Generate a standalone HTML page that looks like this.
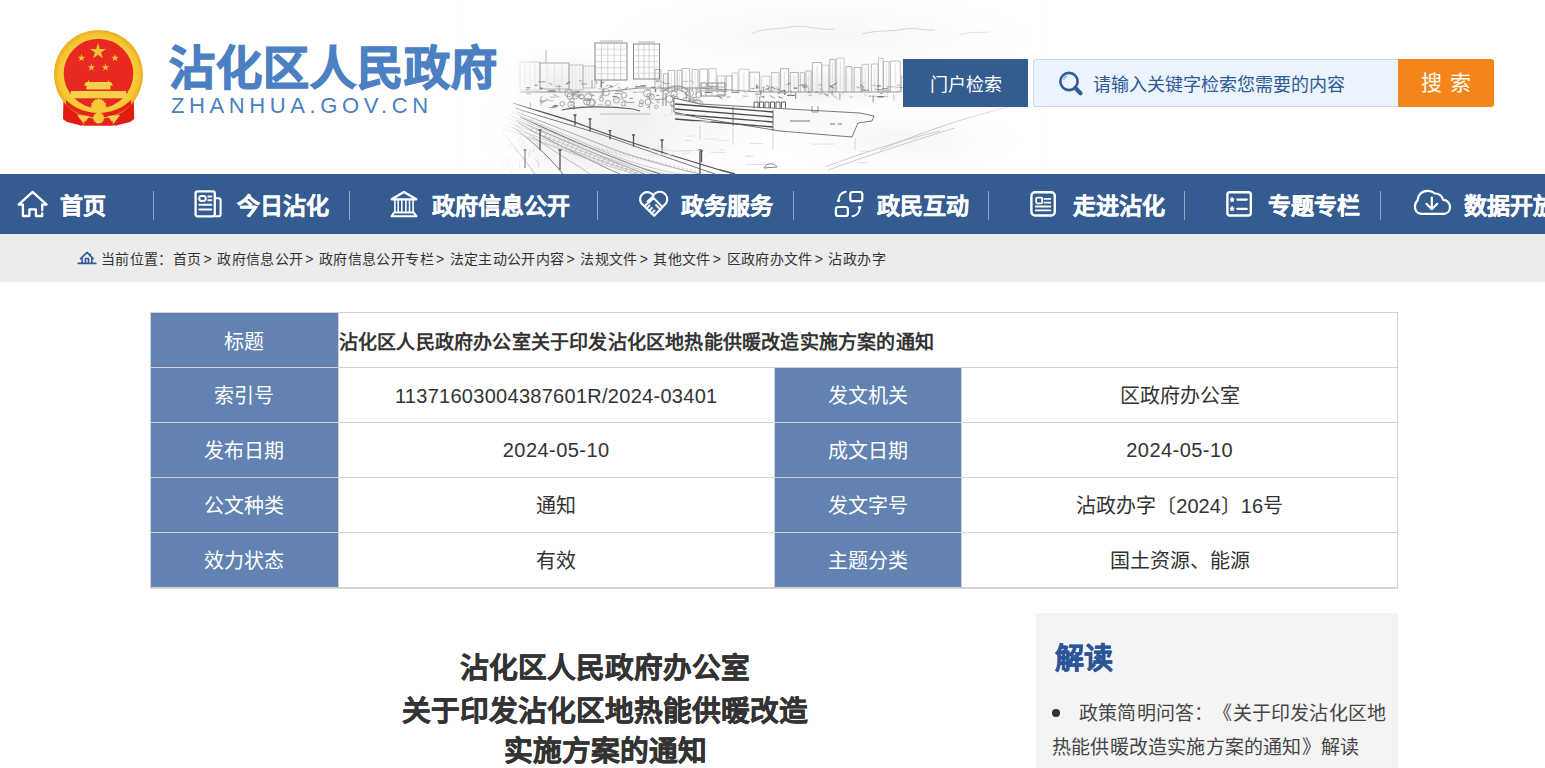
<!DOCTYPE html>
<html lang="zh-CN"><head><meta charset="utf-8">
<style>
*{margin:0;padding:0;box-sizing:border-box}
html,body{text-spacing-trim:space-all;width:1545px;height:768px;overflow:hidden;background:#fff;font-family:"Liberation Sans",sans-serif;color:#333}
.abs{position:absolute}
#header{position:absolute;left:0;top:0;width:1545px;height:174px;background:#fff;overflow:hidden}
.sitename{position:absolute;left:169px;top:38px;font-size:46px;font-weight:900;color:#4b80c2;-webkit-text-stroke:1.4px #4b80c2;letter-spacing:1px;white-space:nowrap;line-height:60px}
.siteen{position:absolute;left:171px;top:93px;font-size:22px;color:#4b80c2;letter-spacing:4.6px;white-space:nowrap;line-height:26px}
.btn-portal{position:absolute;left:903px;top:59px;width:125px;height:48px;background:#335c8f;color:#fff;font-size:18px;text-align:center;line-height:52px}
.search{position:absolute;left:1033px;top:59px;width:366px;height:48px;background:#ebf3fc;border:1px solid #c3d8f1;border-right:none;border-radius:3px 0 0 3px}
.search-txt{position:absolute;left:1093px;top:61px;line-height:48px;font-size:18px;color:#2e5a96;white-space:nowrap}
.btn-search{position:absolute;left:1398px;top:59px;width:96px;height:48px;background:#f48619;color:#fff;font-size:21px;text-align:center;line-height:48px;border-radius:0 3px 3px 0;letter-spacing:8px;text-indent:8px}
#nav{position:absolute;left:0;top:174px;width:1545px;height:60px;background:#345c90}
.ni{position:absolute;top:2px;height:60px;line-height:60px;color:#fff;font-size:23px;font-weight:bold;-webkit-text-stroke:0.35px #fff;white-space:nowrap}
.sep{position:absolute;top:17px;width:1px;height:29px;background:#8fa7c7}
#crumb{position:absolute;left:0;top:234px;width:1545px;height:48px;background:#ececec}
.crumb-txt{position:absolute;left:101px;top:1px;line-height:48px;font-size:14px;color:#333;white-space:nowrap;letter-spacing:0.35px}
.crumb-txt i{font-style:normal;margin:0 1px 0 2px}
table.info{position:absolute;left:150px;top:312px;border-collapse:collapse;width:1248px}
table.info td{border:1px solid #d0d0d0;height:55px;padding:0 0 2px 0;text-align:center;font-size:20px;color:#333}
table.info td.l{background:#6283b1;color:#fff;width:188px}
table.info td.v{width:436px}
.dt{position:absolute;left:305px;width:600px;text-align:center;font-size:28.7px;font-weight:bold;color:#333;-webkit-text-stroke:0.5px #333;line-height:44px;white-space:nowrap}
.side{position:absolute;left:1036px;top:613px;width:362px;height:155px;background:#f4f4f4}
</style></head><body>
<div id="header">
  <svg id="sketch" class="abs" style="left:440px;top:0" width="620" height="174" viewBox="440 0 620 174" fill="none">
<defs><filter id="soft" filterUnits="userSpaceOnUse" x="440" y="0" width="620" height="174"><feGaussianBlur stdDeviation="0.6"/></filter><radialGradient id="haze" cx="0.5" cy="0.5" r="0.5"><stop offset="0" stop-color="#e8e8e8" stop-opacity="0.7"/><stop offset="1" stop-color="#f0f0f0" stop-opacity="0"/></radialGradient></defs><ellipse cx="630" cy="122" rx="150" ry="68" fill="url(#haze)"/><ellipse cx="590" cy="150" rx="100" ry="40" fill="url(#haze)"/><ellipse cx="560" cy="80" rx="60" ry="30" fill="url(#haze)"/><ellipse cx="820" cy="35" rx="210" ry="40" fill="url(#haze)" opacity="0.5"/><ellipse cx="900" cy="140" rx="120" ry="30" fill="url(#haze)" opacity="0.6"/><ellipse cx="820" cy="86" rx="110" ry="28" fill="url(#haze)"/><g filter="url(#soft)">
<path d="M462 0 V174 M1045 0 V174" stroke="#efefef" stroke-width="1" />
<path d="M752 34 C760 28 775 30 790 27 C805 24 820 31 835 29 M862 34 C875 30 890 32 905 29 C915 27 925 31 935 30 M960 35 C970 31 980 33 990 32" stroke="#d0d0d0" stroke-width="0.9" />
<path d="M655.0 92 V69.5 H660.9 V92" stroke="#999" stroke-width="0.7" />
<path d="M658.0 72.5 V90" stroke="#d4d4d4" stroke-width="0.6" />
<path d="M663.4 92 V73.8 H668.0 V92" stroke="#999" stroke-width="0.7" />
<path d="M665.7 76.8 V90" stroke="#d4d4d4" stroke-width="0.6" />
<path d="M668.2 92 V70.4 H674.7 V92" stroke="#999" stroke-width="0.7" />
<path d="M671.5 73.4 V90" stroke="#d4d4d4" stroke-width="0.6" />
<path d="M677.2 92 V70.2 H682.0 V92" stroke="#999" stroke-width="0.7" />
<path d="M679.6 73.2 V90" stroke="#d4d4d4" stroke-width="0.6" />
<path d="M682.1 92 V68.5 H689.7 V92" stroke="#a8a8a8" stroke-width="0.7" />
<path d="M685.9 71.5 V90" stroke="#d4d4d4" stroke-width="0.6" />
<path d="M692.2 92 V69.4 H698.0 V92" stroke="#a8a8a8" stroke-width="0.7" />
<path d="M695.1 72.4 V90" stroke="#d4d4d4" stroke-width="0.6" />
<path d="M699.7 92 V69.0 H707.7 V92" stroke="#999" stroke-width="0.7" />
<path d="M708.9 92 V68.6 H716.2 V92" stroke="#a8a8a8" stroke-width="0.7" />
<path d="M717.6 92 V75.8 H724.8 V92" stroke="#b8b8b8" stroke-width="0.7" />
<path d="M721.2 78.8 V90" stroke="#d4d4d4" stroke-width="0.6" />
<path d="M726.2 92 V75.9 H732.0 V92" stroke="#999" stroke-width="0.7" />
<path d="M732.2 92 V73.0 H738.0 V92" stroke="#b8b8b8" stroke-width="0.7" />
<path d="M738.9 92 V69.2 H748.8 V92" stroke="#b8b8b8" stroke-width="0.7" />
<path d="M743.8 72.2 V90" stroke="#d4d4d4" stroke-width="0.6" />
<path d="M749.8 92 V72.2 H759.4 V92" stroke="#999" stroke-width="0.7" />
<path d="M754.6 75.2 V90" stroke="#d4d4d4" stroke-width="0.6" />
<path d="M761.1 92 V76.2 H769.8 V92" stroke="#b8b8b8" stroke-width="0.7" />
<path d="M771.6 92 V72.6 H779.1 V92" stroke="#a8a8a8" stroke-width="0.7" />
<path d="M780.5 92 V68.6 H788.5 V92" stroke="#999" stroke-width="0.7" />
<path d="M784.5 71.6 V90" stroke="#d4d4d4" stroke-width="0.6" />
<path d="M790.2 92 V72.5 H798.3 V92" stroke="#999" stroke-width="0.7" />
<path d="M794.3 75.5 V90" stroke="#d4d4d4" stroke-width="0.6" />
<path d="M800.3 92 V72.6 H804.4 V92" stroke="#a8a8a8" stroke-width="0.7" />
<path d="M805.9 92 V70.9 H811.2 V92" stroke="#999" stroke-width="0.7" />
<path d="M808.6 73.9 V90" stroke="#d4d4d4" stroke-width="0.6" />
<path d="M812.4 92 V62.5 H821.6 V92" stroke="#999" stroke-width="0.7" />
<path d="M817.0 65.5 V90" stroke="#d4d4d4" stroke-width="0.6" />
<path d="M822.0 92 V65.1 H828.6 V92" stroke="#b8b8b8" stroke-width="0.7" />
<path d="M829.8 92 V59.5 H835.2 V92" stroke="#999" stroke-width="0.7" />
<path d="M832.5 62.5 V90" stroke="#d4d4d4" stroke-width="0.6" />
<path d="M836.6 92 V58.0 H844.1 V92" stroke="#b8b8b8" stroke-width="0.7" />
<path d="M840.4 61.0 V90" stroke="#d4d4d4" stroke-width="0.6" />
<path d="M846.0 92 V66.6 H851.9 V92" stroke="#999" stroke-width="0.7" />
<path d="M854.1 92 V67.5 H860.8 V92" stroke="#999" stroke-width="0.7" />
<path d="M862.0 92 V64.3 H868.4 V92" stroke="#a8a8a8" stroke-width="0.7" />
<path d="M865.2 67.3 V90" stroke="#d4d4d4" stroke-width="0.6" />
<path d="M871.4 92 V64.0 H878.0 V92" stroke="#a8a8a8" stroke-width="0.7" />
<path d="M874.7 67.0 V90" stroke="#d4d4d4" stroke-width="0.6" />
<path d="M878.5 92 V58.3 H883.1 V92" stroke="#a8a8a8" stroke-width="0.7" />
<path d="M883.5 92 V61.6 H889.0 V92" stroke="#a8a8a8" stroke-width="0.7" />
<path d="M886.3 64.6 V90" stroke="#d4d4d4" stroke-width="0.6" />
<path d="M890.5 92 V61.1 H900.4 V92" stroke="#a8a8a8" stroke-width="0.7" />
<path d="M895.4 64.1 V90" stroke="#d4d4d4" stroke-width="0.6" />
<path d="M901.4 92 V76.3 H907.0 V92" stroke="#a8a8a8" stroke-width="0.7" />
<path d="M904.2 79.3 V90" stroke="#d4d4d4" stroke-width="0.6" />
<rect x="520" y="62" width="20" height="28" stroke="#c8c8c8" stroke-width="0.8"/>
<path d="M525.0 62 V90" stroke="#d8d8d8" stroke-width="0.6" />
<path d="M530.0 62 V90" stroke="#d8d8d8" stroke-width="0.6" />
<path d="M535.0 62 V90" stroke="#d8d8d8" stroke-width="0.6" />
<rect x="540" y="63" width="29" height="26" stroke="#9a9a9a" stroke-width="0.8"/>
<path d="M547.2 63 V89" stroke="#d8d8d8" stroke-width="0.6" />
<path d="M554.5 63 V89" stroke="#d8d8d8" stroke-width="0.6" />
<path d="M561.8 63 V89" stroke="#d8d8d8" stroke-width="0.6" />
<rect x="569" y="65" width="14" height="25" stroke="#b0b0b0" stroke-width="0.8"/>
<path d="M572.5 65 V90" stroke="#d8d8d8" stroke-width="0.6" />
<path d="M576.0 65 V90" stroke="#d8d8d8" stroke-width="0.6" />
<path d="M579.5 65 V90" stroke="#d8d8d8" stroke-width="0.6" />
<rect x="583" y="66" width="12" height="22" stroke="#b8b8b8" stroke-width="0.8"/>
<path d="M586.0 66 V88" stroke="#d8d8d8" stroke-width="0.6" />
<path d="M589.0 66 V88" stroke="#d8d8d8" stroke-width="0.6" />
<path d="M592.0 66 V88" stroke="#d8d8d8" stroke-width="0.6" />
<path d="M546 50 V63" stroke="#aaa" stroke-width="0.8" />
<rect x="595" y="43" width="32" height="37" stroke="#7c7c7c" stroke-width="0.9"/>
<path d="M601.4 43 V80" stroke="#b9b9b9" stroke-width="0.6" />
<path d="M607.8 43 V80" stroke="#b9b9b9" stroke-width="0.6" />
<path d="M614.2 43 V80" stroke="#b9b9b9" stroke-width="0.6" />
<path d="M620.6 43 V80" stroke="#b9b9b9" stroke-width="0.6" />
<path d="M595 49.2 H627" stroke="#c6c6c6" stroke-width="0.6" />
<path d="M595 55.3 H627" stroke="#c6c6c6" stroke-width="0.6" />
<path d="M595 61.5 H627" stroke="#c6c6c6" stroke-width="0.6" />
<path d="M595 67.7 H627" stroke="#c6c6c6" stroke-width="0.6" />
<path d="M595 73.8 H627" stroke="#c6c6c6" stroke-width="0.6" />
<rect x="633.5" y="44" width="26" height="35" stroke="#7c7c7c" stroke-width="0.9"/>
<path d="M638.7 44 V79" stroke="#b9b9b9" stroke-width="0.6" />
<path d="M643.9 44 V79" stroke="#b9b9b9" stroke-width="0.6" />
<path d="M649.1 44 V79" stroke="#b9b9b9" stroke-width="0.6" />
<path d="M654.3 44 V79" stroke="#b9b9b9" stroke-width="0.6" />
<path d="M633.5 49.8 H659.5" stroke="#c6c6c6" stroke-width="0.6" />
<path d="M633.5 55.7 H659.5" stroke="#c6c6c6" stroke-width="0.6" />
<path d="M633.5 61.5 H659.5" stroke="#c6c6c6" stroke-width="0.6" />
<path d="M633.5 67.3 H659.5" stroke="#c6c6c6" stroke-width="0.6" />
<path d="M633.5 73.2 H659.5" stroke="#c6c6c6" stroke-width="0.6" />
<path d="M600 41 H623 M638 42 H655" stroke="#999" stroke-width="0.8" />
<path d="M882.0 88.7 l6.1 0.0" stroke="#666" stroke-width="0.74904484517314" />
<path d="M766.1 85.2 l6.1 3.5" stroke="#aaa" stroke-width="1.05412927183152" />
<path d="M658.4 86.2 l4.5 2.6" stroke="#aaa" stroke-width="0.9182209626698556" />
<path d="M755.0 94.2 l6.5 0.0" stroke="#999" stroke-width="1.0091664716626867" />
<path d="M802.5 86.9 l5.1 0.0" stroke="#777" stroke-width="1.094801793351535" />
<path d="M821.3 90.1 l2.7 1.6" stroke="#aaa" stroke-width="0.8236138388833618" />
<path d="M876.4 96.8 l7.7 0.0" stroke="#777" stroke-width="0.7102311614981187" />
<path d="M610.1 85.5 l2.8 1.6" stroke="#666" stroke-width="1.020217763639645" />
<path d="M704.8 92.5 l6.8 0.0" stroke="#777" stroke-width="1.0548885687758616" />
<path d="M818.4 93.8 l4.9 0.0" stroke="#bbb" stroke-width="0.9945677155101382" />
<path d="M649.7 102.4 l0.0 7.8" stroke="#bbb" stroke-width="0.8006934089338508" />
<path d="M880.0 93.4 l3.0 0.0" stroke="#777" stroke-width="0.6755753501907449" />
<path d="M864.3 94.5 l2.5 1.4" stroke="#bbb" stroke-width="0.92863414636801" />
<path d="M656.4 95.4 l2.8 0.0" stroke="#777" stroke-width="0.8632905235495278" />
<path d="M875.1 89.6 l7.2 0.0" stroke="#777" stroke-width="0.7259174056827269" />
<path d="M634.9 86.7 l5.5 0.0" stroke="#666" stroke-width="0.8095062763772718" />
<path d="M574.2 105.5 l0.0 4.1" stroke="#666" stroke-width="1.007523516209039" />
<path d="M718.8 94.8 l7.3 0.0" stroke="#666" stroke-width="0.6759181921314693" />
<path d="M716.5 95.3 l5.8 3.3" stroke="#777" stroke-width="0.9880194827883335" />
<path d="M581.2 84.0 l5.7 0.0" stroke="#666" stroke-width="0.6308776435478857" />
<path d="M780.9 90.9 l4.9 0.0" stroke="#666" stroke-width="0.6284112850148019" />
<path d="M596.7 81.2 l0.0 2.6" stroke="#666" stroke-width="0.6139328791200859" />
<path d="M860.3 84.8 l3.4 2.0" stroke="#666" stroke-width="0.8560807362176597" />
<path d="M784.8 89.9 l0.0 5.2" stroke="#666" stroke-width="1.0707505637692505" />
<path d="M787.2 95.4 l7.7 0.0" stroke="#666" stroke-width="1.0463774708780165" />
<path d="M601.0 92.5 l0.0 4.5" stroke="#bbb" stroke-width="0.7579898971041519" />
<path d="M776.7 89.6 l3.3 0.0" stroke="#777" stroke-width="1.0485132164393836" />
<path d="M582.9 100.1 l6.0 0.0" stroke="#aaa" stroke-width="1.0414164168285378" />
<path d="M887.8 86.9 l0.0 7.7" stroke="#bbb" stroke-width="0.6813975855330804" />
<path d="M775.4 86.9 l5.4 3.1" stroke="#bbb" stroke-width="0.76955807216941" />
<path d="M598.4 88.9 l6.3 0.0" stroke="#aaa" stroke-width="0.877025123904164" />
<path d="M690.2 80.5 l3.5 2.0" stroke="#aaa" stroke-width="0.8561311422317278" />
<path d="M549.1 107.6 l6.7 0.0" stroke="#777" stroke-width="0.7327821361717599" />
<path d="M539.8 101.8 l3.6 0.0" stroke="#bbb" stroke-width="1.0247939136304476" />
<path d="M778.5 96.3 l3.8 2.2" stroke="#666" stroke-width="0.885297462696627" />
<path d="M787.7 85.2 l2.0 -1.2" stroke="#999" stroke-width="0.8126585203978614" />
<path d="M552.2 106.3 l5.8 0.0" stroke="#777" stroke-width="0.9040887112029964" />
<path d="M608.4 87.4 l2.7 0.0" stroke="#aaa" stroke-width="1.0971529452244346" />
<path d="M681.7 105.6 l5.7 0.0" stroke="#666" stroke-width="0.9547683590592302" />
<path d="M876.8 96.6 l3.6 0.0" stroke="#999" stroke-width="1.0661234442591385" />
<path d="M760.8 90.9 l0.0 3.2" stroke="#666" stroke-width="0.9360785997580733" />
<path d="M626.4 102.5 l8.0 0.0" stroke="#777" stroke-width="0.6092169483493283" />
<path d="M714.6 96.7 l5.1 0.0" stroke="#bbb" stroke-width="0.6531406725135457" />
<path d="M832.1 89.6 l0.0 5.0" stroke="#666" stroke-width="0.7538915249993716" />
<path d="M605.7 86.4 l2.8 -1.6" stroke="#999" stroke-width="0.8023488543534207" />
<path d="M655.3 81.5 l2.8 0.0" stroke="#aaa" stroke-width="0.815370353919441" />
<path d="M545.8 98.6 l3.7 2.1" stroke="#aaa" stroke-width="0.899389206775326" />
<path d="M784.8 84.6 l3.1 0.0" stroke="#bbb" stroke-width="0.6018113563330586" />
<path d="M661.6 89.2 l7.9 0.0" stroke="#999" stroke-width="0.6172233617516859" />
<path d="M855.9 86.8 l3.1 0.0" stroke="#bbb" stroke-width="0.641945280412747" />
<path d="M629.6 98.4 l3.5 0.0" stroke="#777" stroke-width="0.7320843429008286" />
<path d="M558.7 91.2 l2.3 0.0" stroke="#aaa" stroke-width="0.7521222801121692" />
<path d="M612.3 96.4 l5.2 0.0" stroke="#666" stroke-width="0.794758235530225" />
<path d="M647.3 107.6 l2.5 -1.4" stroke="#666" stroke-width="0.9216097248522648" />
<path d="M541.4 103.4 l6.4 -3.7" stroke="#bbb" stroke-width="0.966926061738481" />
<path d="M829.6 85.8 l4.5 2.6" stroke="#666" stroke-width="1.0174687967185132" />
<path d="M826.8 94.7 l4.8 -2.8" stroke="#999" stroke-width="0.6425458514361103" />
<path d="M540.7 97.8 l0.0 7.8" stroke="#bbb" stroke-width="0.8792636232479674" />
<path d="M760.4 92.1 l0.0 6.1" stroke="#aaa" stroke-width="0.601657163563924" />
<path d="M824.1 93.7 l4.3 2.5" stroke="#777" stroke-width="0.929649744652175" />
<path d="M549.8 100.6 l3.5 0.0" stroke="#aaa" stroke-width="0.7173928109159136" />
<path d="M808.7 87.0 l0.0 5.9" stroke="#bbb" stroke-width="1.0227656252032538" />
<path d="M553.8 105.5 l3.7 0.0" stroke="#666" stroke-width="0.9163964213533811" />
<path d="M599.4 96.8 l3.5 -2.0" stroke="#aaa" stroke-width="0.9105753755858603" />
<path d="M575.0 93.5 l4.3 -2.5" stroke="#777" stroke-width="0.9460925862852241" />
<path d="M778.4 87.8 l0.0 5.1" stroke="#bbb" stroke-width="0.8331695771484441" />
<path d="M569.4 105.0 l3.2 0.0" stroke="#bbb" stroke-width="0.6087522279083314" />
<path d="M697.1 103.0 l0.0 7.8" stroke="#aaa" stroke-width="0.793424173481156" />
<path d="M868.7 96.1 l2.4 0.0" stroke="#999" stroke-width="0.9737430890055958" />
<path d="M623.2 90.1 l4.9 -2.8" stroke="#666" stroke-width="0.7397839482384255" />
<path d="M567.3 90.2 l0.0 5.0" stroke="#bbb" stroke-width="0.6124172015453326" />
<path d="M526.3 93.8 l4.7 0.0" stroke="#999" stroke-width="0.8080905971823638" />
<path d="M666.0 83.4 l4.0 0.0" stroke="#aaa" stroke-width="1.019555397325231" />
<path d="M570.0 105.9 l5.4 -3.1" stroke="#aaa" stroke-width="0.7266061081447527" />
<path d="M549.4 90.9 l7.2 0.0" stroke="#aaa" stroke-width="1.0627077446432887" />
<path d="M808.4 95.1 l3.7 0.0" stroke="#aaa" stroke-width="0.9174817485198001" />
<path d="M580.8 107.2 l4.6 0.0" stroke="#999" stroke-width="0.986591819574495" />
<path d="M819.4 89.6 l1.9 -1.1" stroke="#bbb" stroke-width="1.0567119437296926" />
<path d="M877.8 91.1 l6.3 0.0" stroke="#bbb" stroke-width="0.8254302114803869" />
<path d="M807.3 92.4 l3.7 0.0" stroke="#666" stroke-width="0.6636556601925299" />
<path d="M702.1 88.5 l3.3 -1.9" stroke="#aaa" stroke-width="0.8031046325564211" />
<path d="M614.5 93.5 l6.0 0.0" stroke="#999" stroke-width="0.9216025164785123" />
<path d="M553.2 94.0 l6.0 3.4" stroke="#999" stroke-width="0.8264930378878839" />
<path d="M649.8 101.3 l4.0 2.3" stroke="#999" stroke-width="0.7220428164702449" />
<path d="M590.5 95.6 l3.9 0.0" stroke="#aaa" stroke-width="1.0046792222917742" />
<path d="M600.8 80.6 l0.0 7.2" stroke="#bbb" stroke-width="0.9729202729618853" />
<path d="M603.8 87.6 l0.0 6.5" stroke="#aaa" stroke-width="0.8871403841960626" />
<path d="M660.1 99.2 l5.2 0.0" stroke="#777" stroke-width="0.7355104405313363" />
<path d="M618.2 91.2 l4.7 0.0" stroke="#777" stroke-width="0.6636235104212295" />
<path d="M684.4 101.4 l5.9 3.4" stroke="#bbb" stroke-width="0.6000893439096878" />
<path d="M671.8 106.0 l0.0 7.0" stroke="#bbb" stroke-width="0.7242326415445923" />
<path d="M565.9 84.3 l4.4 -2.6" stroke="#777" stroke-width="1.0707452797345645" />
<path d="M795.7 92.4 l0.0 6.6" stroke="#777" stroke-width="0.8757504574092538" />
<path d="M539.8 101.9 l3.4 0.0" stroke="#aaa" stroke-width="1.0812174481450276" />
<path d="M759.9 90.9 l4.6 0.0" stroke="#777" stroke-width="0.6351759541792769" />
<path d="M721.7 91.6 l4.3 0.0" stroke="#666" stroke-width="0.6005760118755014" />
<path d="M726.6 97.0 l3.7 0.0" stroke="#999" stroke-width="0.8376521100337718" />
<path d="M613.0 86.9 l6.7 -3.9" stroke="#aaa" stroke-width="0.6276543573356694" />
<path d="M597.8 104.8 l5.9 0.0" stroke="#aaa" stroke-width="0.7139202552562768" />
<path d="M684.1 90.4 l4.3 -2.5" stroke="#aaa" stroke-width="0.9591661208143714" />
<path d="M660.9 91.1 l2.0 0.0" stroke="#666" stroke-width="0.6337162286237574" />
<path d="M710.9 86.6 l6.6 0.0" stroke="#999" stroke-width="0.8325570368075476" />
<path d="M624.4 104.9 l2.3 1.3" stroke="#bbb" stroke-width="0.9050491556052611" />
<path d="M861.2 90.3 l7.5 0.0" stroke="#666" stroke-width="0.6731915269863737" />
<path d="M672.5 86.0 l7.8 0.0" stroke="#bbb" stroke-width="0.6259202707926131" />
<path d="M547.6 91.0 l7.4 0.0" stroke="#777" stroke-width="1.0987649026489303" />
<path d="M874.3 88.3 l2.7 1.6" stroke="#bbb" stroke-width="0.615946843891692" />
<path d="M774.2 88.9 l4.2 0.0" stroke="#bbb" stroke-width="0.6846304711288126" />
<path d="M526.1 87.8 l4.1 0.0" stroke="#666" stroke-width="1.0821356078937836" />
<path d="M602.8 90.0 l0.0 6.9" stroke="#777" stroke-width="0.6246286679255086" />
<path d="M702.5 88.8 l7.5 0.0" stroke="#aaa" stroke-width="0.7821244311977915" />
<path d="M861.4 84.4 l3.9 -2.2" stroke="#bbb" stroke-width="0.6203247419579613" />
<path d="M538.1 81.8 l7.5 0.0" stroke="#999" stroke-width="0.9736434022443434" />
<path d="M862.0 88.4 l3.1 1.8" stroke="#777" stroke-width="0.7310862367840032" />
<path d="M793.7 88.1 l3.7 0.0" stroke="#666" stroke-width="1.0582298018249063" />
<path d="M762.7 96.3 l2.1 0.0" stroke="#777" stroke-width="0.8375945289268016" />
<path d="M883.8 96.4 l4.3 0.0" stroke="#bbb" stroke-width="1.0074001256133387" />
<path d="M574.8 93.9 l1.8 -1.0" stroke="#aaa" stroke-width="1.0113776262555643" />
<path d="M814.8 91.9 l4.0 0.0" stroke="#bbb" stroke-width="0.7809292204075792" />
<path d="M818.3 85.0 l3.2 0.0" stroke="#999" stroke-width="0.8038783843246587" />
<path d="M768.6 90.3 l5.3 0.0" stroke="#bbb" stroke-width="1.0417373132155143" />
<path d="M895.4 87.4 l2.5 0.0" stroke="#bbb" stroke-width="0.8492376341984873" />
<path d="M791.2 89.8 l0.0 3.4" stroke="#bbb" stroke-width="0.910153822940821" />
<path d="M777.8 93.7 l6.1 -3.5" stroke="#777" stroke-width="0.9898752959105044" />
<path d="M635.2 87.8 l3.6 0.0" stroke="#aaa" stroke-width="0.699595045445106" />
<path d="M617.8 86.9 l2.5 1.5" stroke="#999" stroke-width="0.7631689595610056" />
<path d="M673.5 107.8 l5.0 0.0" stroke="#777" stroke-width="0.9266632760462005" />
<path d="M896.6 85.3 l4.8 0.0" stroke="#bbb" stroke-width="1.0571877769152682" />
<path d="M540.1 88.2 l2.7 0.0" stroke="#666" stroke-width="1.0864825897959063" />
<path d="M743.7 96.1 l4.2 0.0" stroke="#bbb" stroke-width="0.9015210936216571" />
<path d="M815.6 92.6 l1.8 -1.0" stroke="#666" stroke-width="0.9548530512301177" />
<path d="M656.1 81.0 l4.0 0.0" stroke="#999" stroke-width="1.0999368796308104" />
<path d="M539.3 100.5 l7.5 0.0" stroke="#aaa" stroke-width="0.8044974479016652" />
<path d="M664.4 97.4 l2.5 0.0" stroke="#bbb" stroke-width="0.8740224170815462" />
<path d="M548.7 82.8 l3.8 2.2" stroke="#999" stroke-width="0.9195909728631272" />
<path d="M559.2 84.6 l0.0 6.2" stroke="#aaa" stroke-width="0.9339054707720718" />
<path d="M681.7 81.4 l6.5 0.0" stroke="#bbb" stroke-width="0.808222691037555" />
<path d="M849.1 97.0 l4.2 0.0" stroke="#bbb" stroke-width="0.9640158489531779" />
<path d="M601.4 80.2 l0.0 7.4" stroke="#777" stroke-width="1.0101842905971707" />
<path d="M677.3 104.7 l4.8 0.0" stroke="#999" stroke-width="0.6074171872872688" />
<path d="M731.8 92.3 l7.5 0.0" stroke="#666" stroke-width="0.9110972975463703" />
<path d="M664.1 94.1 l2.9 0.0" stroke="#999" stroke-width="0.860579437657391" />
<path d="M872.1 85.4 l4.9 0.0" stroke="#aaa" stroke-width="0.6633251772720079" />
<path d="M878.7 96.7 l4.9 0.0" stroke="#666" stroke-width="1.0630839066072097" />
<path d="M670.5 105.3 l5.7 0.0" stroke="#999" stroke-width="0.9105265438723733" />
<path d="M755.5 86.5 l4.2 2.4" stroke="#999" stroke-width="0.6208562888195573" />
<path d="M877.0 86.0 l4.2 0.0" stroke="#999" stroke-width="1.0853461486283045" />
<path d="M830.9 86.5 l6.3 -3.7" stroke="#777" stroke-width="0.9339482130043367" />
<path d="M646.6 90.9 l4.1 -2.4" stroke="#aaa" stroke-width="0.9245139286669786" />
<path d="M640.6 87.0 l4.3 0.0" stroke="#bbb" stroke-width="0.8517891989586972" />
<path d="M592.0 80.1 l0.0 7.9" stroke="#999" stroke-width="0.8234094357623354" />
<path d="M757.0 94.6 l0.0 7.0" stroke="#bbb" stroke-width="0.6535380358514215" />
<path d="M573.2 92.1 l0.0 2.6" stroke="#666" stroke-width="0.8550806241374306" />
<path d="M540.3 97.8 l2.2 -1.2" stroke="#aaa" stroke-width="0.9888180431738254" />
<path d="M716.8 84.7 l0.0 5.0" stroke="#999" stroke-width="0.6129282431940366" />
<path d="M549.9 97.2 l6.2 0.0" stroke="#999" stroke-width="0.6658087394450906" />
<path d="M857.1 87.7 l6.9 0.0" stroke="#999" stroke-width="0.632758104924247" />
<path d="M656.6 101.2 l2.6 1.5" stroke="#aaa" stroke-width="1.0525310986326137" />
<path d="M696.2 87.1 l0.0 7.8" stroke="#999" stroke-width="0.8959438832956093" />
<path d="M755.9 87.1 l4.2 0.0" stroke="#999" stroke-width="0.8017327255056401" />
<path d="M763.7 87.6 l0.0 4.0" stroke="#999" stroke-width="0.9960620790156325" />
<path d="M624.1 101.5 l2.3 0.0" stroke="#bbb" stroke-width="0.8775900606865157" />
<path d="M742.5 95.5 l2.3 1.3" stroke="#bbb" stroke-width="0.9689615607174882" />
<path d="M664.3 90.5 l4.2 0.0" stroke="#aaa" stroke-width="0.765414425598976" />
<path d="M555.5 86.4 l5.7 0.0" stroke="#aaa" stroke-width="1.0099121485505507" />
<path d="M620.1 97.9 l6.8 4.0" stroke="#aaa" stroke-width="0.9665193878180942" />
<path d="M805.2 86.9 l3.2 -1.9" stroke="#bbb" stroke-width="0.8088434827054962" />
<path d="M661.5 81.3 l4.3 2.5" stroke="#777" stroke-width="0.6111447611987331" />
<path d="M526.0 89.9 l2.6 0.0" stroke="#666" stroke-width="0.712129481186116" />
<path d="M743.8 91.7 l2.8 1.6" stroke="#bbb" stroke-width="0.6793117178035851" />
<path d="M530.3 102.4 l0.0 6.2" stroke="#777" stroke-width="0.6318343216114122" />
<path d="M579.3 98.6 l3.6 0.0" stroke="#777" stroke-width="0.6280652815287834" />
<path d="M832.8 95.6 l4.8 2.8" stroke="#bbb" stroke-width="0.9009407331688595" />
<path d="M719.1 90.4 l3.0 0.0" stroke="#777" stroke-width="0.6307642576527871" />
<path d="M534.5 85.2 l3.0 0.0" stroke="#777" stroke-width="0.9063197938759735" />
<path d="M771.3 86.6 l3.9 2.2" stroke="#666" stroke-width="0.9213468436410583" />
<path d="M767.8 89.4 l4.9 2.8" stroke="#aaa" stroke-width="0.6318835947672508" />
<path d="M759.7 96.9 l0.0 6.3" stroke="#666" stroke-width="0.603174701240505" />
<path d="M841.7 93.7 l4.1 -2.4" stroke="#bbb" stroke-width="0.6876958639396296" />
<path d="M898.7 87.4 l5.9 0.0" stroke="#aaa" stroke-width="1.0456369644018042" />
<path d="M871.9 96.3 l3.6 0.0" stroke="#aaa" stroke-width="0.9179329691595873" />
<path d="M779.7 92.9 l7.5 0.0" stroke="#aaa" stroke-width="0.9210015927574435" />
<path d="M886.9 86.8 l7.3 0.0" stroke="#999" stroke-width="0.7301843259658758" />
<path d="M613.5 100.8 l6.6 -3.8" stroke="#aaa" stroke-width="0.6959684881574094" />
<path d="M670.8 96.8 l3.7 -2.1" stroke="#666" stroke-width="0.8347464728062619" />
<path d="M839.9 93.1 l0.0 7.1" stroke="#999" stroke-width="0.8851702380357634" />
<path d="M640.4 85.9 l5.7 0.0" stroke="#666" stroke-width="1.0553948647213953" />
<path d="M579.2 80.8 l2.6 0.0" stroke="#aaa" stroke-width="1.088704037449664" />
<path d="M787.8 84.4 l2.5 -1.4" stroke="#777" stroke-width="0.9485038618289966" />
<path d="M801.3 84.9 l5.5 0.0" stroke="#999" stroke-width="1.0087808130479223" />
<path d="M832.3 95.6 l2.1 -1.2" stroke="#bbb" stroke-width="0.6535579444713049" />
<path d="M602.1 83.1 l1.9 -1.1" stroke="#777" stroke-width="1.0125301344373316" />
<path d="M761.8 87.7 l2.6 0.0" stroke="#999" stroke-width="0.7472296987441885" />
<path d="M651.2 87.3 l4.1 0.0" stroke="#777" stroke-width="0.9578810943657606" />
<path d="M663.0 89.0 l6.7 3.9" stroke="#bbb" stroke-width="1.0256886627064972" />
<path d="M756.9 84.4 l0.0 4.5" stroke="#666" stroke-width="0.9865129429783654" />
<path d="M655.0 99.7 l5.2 0.0" stroke="#777" stroke-width="0.8872704558812498" />
<path d="M632.7 92.2 l5.1 0.0" stroke="#777" stroke-width="0.6021808346651631" />
<path d="M709.1 90.4 l6.8 0.0" stroke="#bbb" stroke-width="0.8962774200260106" />
<path d="M884.0 90.7 l5.5 0.0" stroke="#aaa" stroke-width="1.0076204717707424" />
<path d="M876.9 87.0 l2.6 -1.5" stroke="#777" stroke-width="0.845145852818765" />
<path d="M896.7 91.3 l2.6 0.0" stroke="#aaa" stroke-width="0.6475742347585803" />
<path d="M873.2 95.6 l0.0 6.5" stroke="#777" stroke-width="0.785974997304815" />
<path d="M638.7 92.0 l5.3 0.0" stroke="#bbb" stroke-width="1.0912049468009868" />
<path d="M761.5 96.3 l2.4 1.4" stroke="#666" stroke-width="0.9231499419878577" />
<path d="M655.7 89.1 l0.0 2.9" stroke="#666" stroke-width="0.9709936265771609" />
<path d="M588.6 92.3 l5.8 3.3" stroke="#999" stroke-width="0.6630285230802512" />
<path d="M698.3 104.8 l3.4 0.0" stroke="#aaa" stroke-width="0.7507538473409973" />
<path d="M788.7 95.0 l2.9 0.0" stroke="#999" stroke-width="0.9615799446648455" />
<path d="M751.1 88.5 l3.4 0.0" stroke="#aaa" stroke-width="1.0875741040519196" />
<path d="M798.3 85.3 l7.8 0.0" stroke="#999" stroke-width="0.7921164473554496" />
<path d="M893.9 94.3 l0.0 6.4" stroke="#aaa" stroke-width="0.6980954658585752" />
<path d="M764.2 85.4 l0.0 3.2" stroke="#bbb" stroke-width="0.6169658028059352" />
<path d="M674.6 102.1 l5.3 3.1" stroke="#aaa" stroke-width="0.8316396237243611" />
<path d="M578.2 96.9 l3.8 -2.2" stroke="#999" stroke-width="1.0540019439641064" />
<path d="M686.3 96.1 l0.0 6.5" stroke="#999" stroke-width="0.9339478698455528" />
<path d="M769.7 95.4 l5.1 2.9" stroke="#999" stroke-width="0.9397982611563241" />
<path d="M765.6 89.9 l3.4 -1.9" stroke="#777" stroke-width="1.0473721139862404" />
<path d="M615.9 91.2 l6.3 0.0" stroke="#aaa" stroke-width="1.0247207284852111" />
<path d="M706.0 84.3 l6.2 3.6" stroke="#999" stroke-width="1.0472472096029286" />
<circle cx="605.9" cy="92.2" r="3.6" stroke="#8a8a8a" stroke-width="0.7"/>
<circle cx="687.1" cy="93.6" r="2.1" stroke="#8a8a8a" stroke-width="0.7"/>
<circle cx="590.5" cy="102.7" r="3.9" stroke="#8a8a8a" stroke-width="0.7"/>
<circle cx="588.0" cy="97.2" r="3.6" stroke="#8a8a8a" stroke-width="0.7"/>
<circle cx="623.9" cy="95.1" r="2.7" stroke="#8a8a8a" stroke-width="0.7"/>
<circle cx="562.3" cy="103.9" r="2.4" stroke="#8a8a8a" stroke-width="0.7"/>
<circle cx="608.0" cy="103.1" r="2.6" stroke="#8a8a8a" stroke-width="0.7"/>
<circle cx="698.6" cy="94.8" r="2.8" stroke="#8a8a8a" stroke-width="0.7"/>
<circle cx="690.6" cy="102.9" r="3.0" stroke="#8a8a8a" stroke-width="0.7"/>
<circle cx="649.3" cy="95.8" r="2.5" stroke="#8a8a8a" stroke-width="0.7"/>
<circle cx="568.6" cy="93.1" r="3.8" stroke="#8a8a8a" stroke-width="0.7"/>
<circle cx="648.0" cy="102.1" r="3.0" stroke="#8a8a8a" stroke-width="0.7"/>
<circle cx="575.3" cy="96.6" r="2.5" stroke="#8a8a8a" stroke-width="0.7"/>
<circle cx="693.5" cy="106.6" r="4.0" stroke="#8a8a8a" stroke-width="0.7"/>
<circle cx="694.5" cy="98.9" r="1.9" stroke="#8a8a8a" stroke-width="0.7"/>
<circle cx="690.1" cy="93.0" r="3.5" stroke="#8a8a8a" stroke-width="0.7"/>
<circle cx="587.0" cy="101.6" r="3.3" stroke="#8a8a8a" stroke-width="0.7"/>
<circle cx="674.0" cy="94.2" r="3.2" stroke="#8a8a8a" stroke-width="0.7"/>
<circle cx="676.3" cy="103.9" r="2.5" stroke="#8a8a8a" stroke-width="0.7"/>
<circle cx="699.5" cy="103.4" r="3.1" stroke="#8a8a8a" stroke-width="0.7"/>
<circle cx="669.2" cy="99.0" r="3.5" stroke="#8a8a8a" stroke-width="0.7"/>
<circle cx="592.3" cy="102.6" r="3.2" stroke="#8a8a8a" stroke-width="0.7"/>
<circle cx="697.6" cy="102.2" r="2.7" stroke="#8a8a8a" stroke-width="0.7"/>
<circle cx="672.8" cy="104.0" r="2.4" stroke="#8a8a8a" stroke-width="0.7"/>
<circle cx="651.6" cy="96.8" r="2.7" stroke="#8a8a8a" stroke-width="0.7"/>
<circle cx="647.3" cy="93.3" r="3.7" stroke="#8a8a8a" stroke-width="0.7"/>
<circle cx="581.4" cy="96.5" r="2.5" stroke="#8a8a8a" stroke-width="0.7"/>
<circle cx="571.9" cy="100.5" r="2.3" stroke="#8a8a8a" stroke-width="0.7"/>
<circle cx="692.0" cy="100.0" r="2.4" stroke="#8a8a8a" stroke-width="0.7"/>
<circle cx="641.5" cy="101.9" r="2.0" stroke="#8a8a8a" stroke-width="0.7"/>
<circle cx="570.1" cy="96.4" r="3.0" stroke="#8a8a8a" stroke-width="0.7"/>
<circle cx="641.0" cy="104.8" r="2.0" stroke="#8a8a8a" stroke-width="0.7"/>
<circle cx="623.3" cy="103.8" r="2.0" stroke="#8a8a8a" stroke-width="0.7"/>
<circle cx="616.3" cy="100.0" r="3.0" stroke="#8a8a8a" stroke-width="0.7"/>
<circle cx="656.3" cy="106.7" r="1.7" stroke="#8a8a8a" stroke-width="0.7"/>
<circle cx="686.2" cy="100.2" r="3.1" stroke="#8a8a8a" stroke-width="0.7"/>
<circle cx="601.6" cy="99.4" r="2.0" stroke="#8a8a8a" stroke-width="0.7"/>
<circle cx="571.0" cy="104.6" r="3.2" stroke="#8a8a8a" stroke-width="0.7"/>
<circle cx="576.4" cy="93.8" r="2.5" stroke="#8a8a8a" stroke-width="0.7"/>
<circle cx="675.8" cy="99.1" r="2.9" stroke="#8a8a8a" stroke-width="0.7"/>
<path d="M520 92 H600 L640 88 H700 L760 92 H900" stroke="#8c8c8c" stroke-width="0.9" />
<path d="M562 110 C580 106 610 106 633 109 L640 111" stroke="#666" stroke-width="1.1" />
<path d="M600 114 H650" stroke="#aaa" stroke-width="0.8" />
<path d="M663 106 V92 C670 84 684 84 690 92 V106 M666 106 V95 C672 88 682 88 687 95" stroke="#888" stroke-width="0.9" />
<rect x="701" y="83" width="24" height="13" stroke="#777" stroke-width="0.8"/>
<path d="M701 87 H725 M701 91 H725 M706 83 V96 M712 83 V96 M718 83 V96" stroke="#999" stroke-width="0.7" />
<path d="M674 98 L700 104 L860 113 L874 116 L872 121 L858 123 L852 137 L780 131 L700 118 L674 112 Z" stroke="#6a6a6a" stroke-width="0.9" fill="#fafafa"/>
<path d="M675 104 L773 112" stroke="#4a4a4a" stroke-width="1.3" />
<path d="M675 109 L773 117" stroke="#4a4a4a" stroke-width="1.3" />
<path d="M675 114 L773 122" stroke="#4a4a4a" stroke-width="1.3" />
<path d="M675 119 L773 127" stroke="#4a4a4a" stroke-width="1.3" />
<path d="M733 107 V126 M773 110 V131 M790 121 H810 M830 124 H835 M838 124 H842" stroke="#666" stroke-width="0.9" />
<path d="M754.0 108 V102 H758.0 V108" stroke="#555" stroke-width="0.9" />
<path d="M759.5 108 V102 H763.5 V108" stroke="#555" stroke-width="0.9" />
<path d="M765.0 108 V102 H769.0 V108" stroke="#555" stroke-width="0.9" />
<path d="M770.5 108 V102 H774.5 V108" stroke="#555" stroke-width="0.9" />
<path d="M776.0 108 V102 H780.0 V108" stroke="#555" stroke-width="0.9" />
<path d="M781.5 108 V102 H785.5 V108" stroke="#555" stroke-width="0.9" />
<path d="M812 106 V112 H818 V106" stroke="#777" stroke-width="0.8" />
<path d="M700 125 V140 M733 128 V145 M773 133 V150 M855 138 V150" stroke="#d0d0d0" stroke-width="0.9" />
<path d="M513 103 C540 112 565 118 585 126 C620 140 670 155 720 170 L735 174" stroke="#555" stroke-width="1.3" />
<path d="M515 108 C545 118 575 126 600 134 C640 148 680 162 715 174" stroke="#777" stroke-width="1.0" />
<path d="M520 117 C545 128 570 140 600 152 C620 160 640 168 660 174" stroke="#666" stroke-width="1.0" />
<path d="M518 123 C540 135 560 146 590 160 C600 165 610 170 620 174" stroke="#888" stroke-width="0.9" />
<path d="M513 127 C530 140 545 152 563 174" stroke="#777" stroke-width="1.0" />
<path d="M505 135 C515 148 525 160 535 174" stroke="#aaa" stroke-width="0.9" />
<path d="M498 140 C503 152 508 165 512 174" stroke="#c8c8c8" stroke-width="0.9" />
<path d="M517 112 C548 124 585 138 615 150 C645 160 680 170 700 174" stroke="#999" stroke-width="0.8" />
<path d="M516 120 C545 132 575 145 605 158 C620 164 635 170 645 174" stroke="#999" stroke-width="0.8" />
<path d="M515 125 C535 138 555 152 578 166 L590 174" stroke="#aaa" stroke-width="0.8" />
<path d="M512 112.0 C545 126.0 590 146.0 620 158.0 C650 168.0 668 172.0 680 174" stroke="#b8b8b8" stroke-width="0.7" />
<path d="M510 115.2 C545 129.2 590 149.2 623 161.2 C650 171.2 668 175.2 672 174" stroke="#b8b8b8" stroke-width="0.7" />
<path d="M508 118.4 C545 132.4 590 152.4 626 164.4 C650 174.4 668 178.4 664 174" stroke="#b8b8b8" stroke-width="0.7" />
<path d="M506 121.6 C545 135.6 590 155.6 629 167.6 C650 177.6 668 181.6 656 174" stroke="#b8b8b8" stroke-width="0.7" />
<path d="M504 124.8 C545 138.8 590 158.8 632 170.8 C650 180.8 668 184.8 648 174" stroke="#b8b8b8" stroke-width="0.7" />
<path d="M502 128.0 C545 142.0 590 162.0 635 174.0 C650 184.0 668 188.0 640 174" stroke="#b8b8b8" stroke-width="0.7" />
<path d="M560.0 138.0 l2.5 3.5" stroke="#b0b0b0" stroke-width="0.6" />
<path d="M564.2 139.0 l2.5 3.5" stroke="#b0b0b0" stroke-width="0.6" />
<path d="M568.4 140.0 l2.5 3.5" stroke="#b0b0b0" stroke-width="0.6" />
<path d="M572.6 141.0 l2.5 3.5" stroke="#b0b0b0" stroke-width="0.6" />
<path d="M576.8 142.0 l2.5 3.5" stroke="#b0b0b0" stroke-width="0.6" />
<path d="M581.0 143.0 l2.5 3.5" stroke="#b0b0b0" stroke-width="0.6" />
<path d="M585.2 144.0 l2.5 3.5" stroke="#b0b0b0" stroke-width="0.6" />
<path d="M589.4 145.0 l2.5 3.5" stroke="#b0b0b0" stroke-width="0.6" />
<path d="M593.6 146.0 l2.5 3.5" stroke="#b0b0b0" stroke-width="0.6" />
<path d="M597.8 147.0 l2.5 3.5" stroke="#b0b0b0" stroke-width="0.6" />
<path d="M602.0 148.0 l2.5 3.5" stroke="#b0b0b0" stroke-width="0.6" />
<path d="M606.2 149.0 l2.5 3.5" stroke="#b0b0b0" stroke-width="0.6" />
<path d="M610.4 150.0 l2.5 3.5" stroke="#b0b0b0" stroke-width="0.6" />
<path d="M614.6 151.0 l2.5 3.5" stroke="#b0b0b0" stroke-width="0.6" />
<path d="M618.8 152.0 l2.5 3.5" stroke="#b0b0b0" stroke-width="0.6" />
<path d="M623.0 153.0 l2.5 3.5" stroke="#b0b0b0" stroke-width="0.6" />
<path d="M627.2 154.0 l2.5 3.5" stroke="#b0b0b0" stroke-width="0.6" />
<path d="M631.4 155.0 l2.5 3.5" stroke="#b0b0b0" stroke-width="0.6" />
<path d="M635.6 156.0 l2.5 3.5" stroke="#b0b0b0" stroke-width="0.6" />
<path d="M639.8 157.0 l2.5 3.5" stroke="#b0b0b0" stroke-width="0.6" />
<path d="M644.0 158.0 l2.5 3.5" stroke="#b0b0b0" stroke-width="0.6" />
<path d="M648.2 159.0 l2.5 3.5" stroke="#b0b0b0" stroke-width="0.6" />
<path d="M652.4 160.0 l2.5 3.5" stroke="#b0b0b0" stroke-width="0.6" />
<path d="M656.6 161.0 l2.5 3.5" stroke="#b0b0b0" stroke-width="0.6" />
<path d="M660.8 162.0 l2.5 3.5" stroke="#b0b0b0" stroke-width="0.6" />
<path d="M665.0 163.0 l2.5 3.5" stroke="#b0b0b0" stroke-width="0.6" />
<path d="M669.2 164.0 l2.5 3.5" stroke="#b0b0b0" stroke-width="0.6" />
<path d="M673.4 165.0 l2.5 3.5" stroke="#b0b0b0" stroke-width="0.6" />
<path d="M677.6 166.0 l2.5 3.5" stroke="#b0b0b0" stroke-width="0.6" />
<path d="M681.8 167.0 l2.5 3.5" stroke="#b0b0b0" stroke-width="0.6" />
<path d="M686.0 168.0 l2.5 3.5" stroke="#b0b0b0" stroke-width="0.6" />
<path d="M690.2 169.0 l2.5 3.5" stroke="#b0b0b0" stroke-width="0.6" />
<path d="M694.4 170.0 l2.5 3.5" stroke="#b0b0b0" stroke-width="0.6" />
<path d="M698.6 171.0 l2.5 3.5" stroke="#b0b0b0" stroke-width="0.6" />
<path d="M702.8 172.0 l2.5 3.5" stroke="#b0b0b0" stroke-width="0.6" />
<path d="M530.0 132.0 l3 -4" stroke="#aaa" stroke-width="0.7" />
<path d="M534.5 133.9 l3 -4" stroke="#aaa" stroke-width="0.7" />
<path d="M539.0 135.8 l3 -4" stroke="#aaa" stroke-width="0.7" />
<path d="M543.5 137.7 l3 -4" stroke="#aaa" stroke-width="0.7" />
<path d="M548.0 139.6 l3 -4" stroke="#aaa" stroke-width="0.7" />
<path d="M552.5 141.5 l3 -4" stroke="#aaa" stroke-width="0.7" />
<path d="M557.0 143.4 l3 -4" stroke="#aaa" stroke-width="0.7" />
<path d="M561.5 145.3 l3 -4" stroke="#aaa" stroke-width="0.7" />
<path d="M566.0 147.2 l3 -4" stroke="#aaa" stroke-width="0.7" />
<path d="M570.5 149.1 l3 -4" stroke="#aaa" stroke-width="0.7" />
<path d="M575.0 151.0 l3 -4" stroke="#aaa" stroke-width="0.7" />
<path d="M579.5 152.9 l3 -4" stroke="#aaa" stroke-width="0.7" />
<path d="M584.0 154.8 l3 -4" stroke="#aaa" stroke-width="0.7" />
<path d="M588.5 156.7 l3 -4" stroke="#aaa" stroke-width="0.7" />
<path d="M593.0 158.6 l3 -4" stroke="#aaa" stroke-width="0.7" />
<path d="M597.5 160.5 l3 -4" stroke="#aaa" stroke-width="0.7" />
<path d="M602.0 162.4 l3 -4" stroke="#aaa" stroke-width="0.7" />
<path d="M606.5 164.3 l3 -4" stroke="#aaa" stroke-width="0.7" />
<path d="M611.0 166.2 l3 -4" stroke="#aaa" stroke-width="0.7" />
<path d="M615.5 168.1 l3 -4" stroke="#aaa" stroke-width="0.7" />
<path d="M620.0 170.0 l3 -4" stroke="#aaa" stroke-width="0.7" />
<path d="M624.5 171.9 l3 -4" stroke="#aaa" stroke-width="0.7" />
<path d="M629.0 173.8 l3 -4" stroke="#aaa" stroke-width="0.7" />
<path d="M633.5 175.7 l3 -4" stroke="#aaa" stroke-width="0.7" />
<path d="M638.0 177.6 l3 -4" stroke="#aaa" stroke-width="0.7" />
<path d="M642.5 179.5 l3 -4" stroke="#aaa" stroke-width="0.7" />
<path d="M647.0 181.4 l3 -4" stroke="#aaa" stroke-width="0.7" />
<path d="M651.5 183.3 l3 -4" stroke="#aaa" stroke-width="0.7" />
<path d="M656.0 185.2 l3 -4" stroke="#aaa" stroke-width="0.7" />
<path d="M660.5 187.1 l3 -4" stroke="#aaa" stroke-width="0.7" />
<path d="M665.0 189.0 l3 -4" stroke="#aaa" stroke-width="0.7" />
<path d="M669.5 190.9 l3 -4" stroke="#aaa" stroke-width="0.7" />
<path d="M674.0 192.8 l3 -4" stroke="#aaa" stroke-width="0.7" />
<path d="M678.5 194.7 l3 -4" stroke="#aaa" stroke-width="0.7" />
<path d="M683.0 196.6 l3 -4" stroke="#aaa" stroke-width="0.7" />
<path d="M687.5 198.5 l3 -4" stroke="#aaa" stroke-width="0.7" />
<path d="M692.0 200.4 l3 -4" stroke="#aaa" stroke-width="0.7" />
<path d="M696.5 202.3 l3 -4" stroke="#aaa" stroke-width="0.7" />
<path d="M525.0 135.0 l2 4" stroke="#b5b5b5" stroke-width="0.6" />
<path d="M529.0 136.3 l2 4" stroke="#b5b5b5" stroke-width="0.6" />
<path d="M533.0 137.6 l2 4" stroke="#b5b5b5" stroke-width="0.6" />
<path d="M537.0 138.9 l2 4" stroke="#b5b5b5" stroke-width="0.6" />
<path d="M541.0 140.2 l2 4" stroke="#b5b5b5" stroke-width="0.6" />
<path d="M545.0 141.5 l2 4" stroke="#b5b5b5" stroke-width="0.6" />
<path d="M549.0 142.8 l2 4" stroke="#b5b5b5" stroke-width="0.6" />
<path d="M553.0 144.1 l2 4" stroke="#b5b5b5" stroke-width="0.6" />
<path d="M557.0 145.4 l2 4" stroke="#b5b5b5" stroke-width="0.6" />
<path d="M561.0 146.7 l2 4" stroke="#b5b5b5" stroke-width="0.6" />
<path d="M565.0 148.0 l2 4" stroke="#b5b5b5" stroke-width="0.6" />
<path d="M569.0 149.3 l2 4" stroke="#b5b5b5" stroke-width="0.6" />
<path d="M573.0 150.6 l2 4" stroke="#b5b5b5" stroke-width="0.6" />
<path d="M577.0 151.9 l2 4" stroke="#b5b5b5" stroke-width="0.6" />
<path d="M581.0 153.2 l2 4" stroke="#b5b5b5" stroke-width="0.6" />
<path d="M585.0 154.5 l2 4" stroke="#b5b5b5" stroke-width="0.6" />
<path d="M589.0 155.8 l2 4" stroke="#b5b5b5" stroke-width="0.6" />
<path d="M593.0 157.1 l2 4" stroke="#b5b5b5" stroke-width="0.6" />
<path d="M597.0 158.4 l2 4" stroke="#b5b5b5" stroke-width="0.6" />
<path d="M601.0 159.7 l2 4" stroke="#b5b5b5" stroke-width="0.6" />
<path d="M605.0 161.0 l2 4" stroke="#b5b5b5" stroke-width="0.6" />
<path d="M609.0 162.3 l2 4" stroke="#b5b5b5" stroke-width="0.6" />
<path d="M613.0 163.6 l2 4" stroke="#b5b5b5" stroke-width="0.6" />
<path d="M617.0 164.9 l2 4" stroke="#b5b5b5" stroke-width="0.6" />
<path d="M621.0 166.2 l2 4" stroke="#b5b5b5" stroke-width="0.6" />
<path d="M625.0 167.5 l2 4" stroke="#b5b5b5" stroke-width="0.6" />
<path d="M629.0 168.8 l2 4" stroke="#b5b5b5" stroke-width="0.6" />
<path d="M633.0 170.1 l2 4" stroke="#b5b5b5" stroke-width="0.6" />
<path d="M637.0 171.4 l2 4" stroke="#b5b5b5" stroke-width="0.6" />
<path d="M641.0 172.7 l2 4" stroke="#b5b5b5" stroke-width="0.6" />
<path d="M575 115 V125.5 M573.5 115 H576.5" stroke="#555" stroke-width="1.3" />
<path d="M590 119 V131.6 M588.5 119 H591.5" stroke="#555" stroke-width="1.3" />
<path d="M610 130.7 V139.4 M608.5 130.7 H611.5" stroke="#555" stroke-width="1.3" />
<path d="M633.5 135 V146.4 M632.0 135 H635.0" stroke="#555" stroke-width="1.3" />
<path d="M662 140 V153.4 M660.5 140 H663.5" stroke="#555" stroke-width="1.3" />
<path d="M701.5 150.8 V162 M700.0 150.8 H703.0" stroke="#555" stroke-width="1.3" />
<path d="M540 130 V150 M538.5 130 H541.5" stroke="#555" stroke-width="1.3" />
<path d="M560 150 V170 M558.5 150 H561.5" stroke="#555" stroke-width="1.3" />
<path d="M525 150 V168 M523.5 150 H526.5" stroke="#555" stroke-width="1.3" />
<path d="M700 150 V174 M698.5 150 H701.5" stroke="#555" stroke-width="1.3" />
<path d="M746.6 164.5 h19.0" stroke="#dcdcdc" stroke-width="0.8" />
<path d="M694.2 121.5 h17.0" stroke="#dcdcdc" stroke-width="0.8" />
<path d="M710.6 152.4 h15.0" stroke="#dcdcdc" stroke-width="0.8" />
<path d="M705.3 139.0 h13.5" stroke="#dcdcdc" stroke-width="0.8" />
<path d="M860.0 151.2 h8.6" stroke="#dcdcdc" stroke-width="0.8" />
<path d="M719.3 149.5 h5.4" stroke="#dcdcdc" stroke-width="0.8" />
<path d="M650.1 154.7 h25.0" stroke="#dcdcdc" stroke-width="0.8" />
<path d="M746.5 155.9 h7.9" stroke="#dcdcdc" stroke-width="0.8" />
<path d="M686.9 136.1 h7.5" stroke="#dcdcdc" stroke-width="0.8" />
<path d="M660.8 150.2 h11.8" stroke="#dcdcdc" stroke-width="0.8" />
<path d="M811.3 144.1 h23.2" stroke="#dcdcdc" stroke-width="0.8" />
<path d="M695.3 115.1 h10.8" stroke="#dcdcdc" stroke-width="0.8" />
<path d="M718.1 140.6 h11.7" stroke="#dcdcdc" stroke-width="0.8" />
<path d="M856.5 162.6 h11.9" stroke="#dcdcdc" stroke-width="0.8" />
<path d="M684.8 140.5 h7.4" stroke="#dcdcdc" stroke-width="0.8" />
<path d="M682.3 153.4 h7.6" stroke="#dcdcdc" stroke-width="0.8" />
<path d="M663.9 114.7 h21.4" stroke="#dcdcdc" stroke-width="0.8" />
<path d="M744.5 156.4 h6.2" stroke="#dcdcdc" stroke-width="0.8" />
<path d="M750.2 143.5 h12.5" stroke="#dcdcdc" stroke-width="0.8" />
<path d="M672.4 151.1 h18.8" stroke="#dcdcdc" stroke-width="0.8" />
<path d="M648.7 148.7 h17.5" stroke="#dcdcdc" stroke-width="0.8" />
<path d="M678.3 150.5 h22.4" stroke="#dcdcdc" stroke-width="0.8" />
<path d="M825 167 C870 150 910 138 940 131 M828 170 C870 155 915 140 955 128 M880 150 C930 128 990 110 1040 100" stroke="#c4c4c4" stroke-width="0.9" />
<path d="M764 168 C766 163 774 162 777 167 Z" stroke="#777" stroke-width="0.9" />
<path d="M505.3 116.4 l3.4 2.1" stroke="#c8c8c8" stroke-width="0.7" />
<path d="M532.3 118.9 l-1.5 6.3" stroke="#c8c8c8" stroke-width="0.7" />
<path d="M531.7 121.8 l-3.7 2.1" stroke="#c8c8c8" stroke-width="0.7" />
<path d="M514.0 147.0 l3.3 5.0" stroke="#c8c8c8" stroke-width="0.7" />
<path d="M511.3 162.8 l2.2 4.5" stroke="#c8c8c8" stroke-width="0.7" />
<path d="M521.7 135.9 l-3.5 6.1" stroke="#c8c8c8" stroke-width="0.7" />
<path d="M515.6 173.6 l1.3 2.9" stroke="#c8c8c8" stroke-width="0.7" />
<path d="M526.2 145.1 l-3.3 4.8" stroke="#c8c8c8" stroke-width="0.7" />
<path d="M533.7 150.1 l-0.6 2.1" stroke="#c8c8c8" stroke-width="0.7" />
<path d="M520.2 173.1 l2.9 3.3" stroke="#c8c8c8" stroke-width="0.7" />
<path d="M487.3 140.2 l-1.8 5.4" stroke="#c8c8c8" stroke-width="0.7" />
<path d="M507.0 157.6 l3.4 4.2" stroke="#c8c8c8" stroke-width="0.7" />
<path d="M524.8 154.5 l-2.8 6.6" stroke="#c8c8c8" stroke-width="0.7" />
<path d="M497.6 145.7 l-0.0 6.0" stroke="#c8c8c8" stroke-width="0.7" />
<path d="M533.4 168.5 l-3.6 2.2" stroke="#c8c8c8" stroke-width="0.7" />
<path d="M483.6 166.5 l1.5 5.7" stroke="#c8c8c8" stroke-width="0.7" />
<path d="M503.3 130.0 l0.8 7.7" stroke="#c8c8c8" stroke-width="0.7" />
<path d="M530.1 149.0 l-1.5 7.7" stroke="#c8c8c8" stroke-width="0.7" />
<path d="M523.7 140.1 l-2.7 7.8" stroke="#c8c8c8" stroke-width="0.7" />
<path d="M487.0 171.0 l-2.7 6.8" stroke="#c8c8c8" stroke-width="0.7" />
<path d="M508.6 159.8 l-0.4 3.6" stroke="#c8c8c8" stroke-width="0.7" />
<path d="M525.3 131.4 l-1.8 5.7" stroke="#c8c8c8" stroke-width="0.7" />
<path d="M519.1 161.3 l0.8 7.2" stroke="#c8c8c8" stroke-width="0.7" />
<path d="M523.5 111.0 l-2.8 7.0" stroke="#c8c8c8" stroke-width="0.7" />
<path d="M515.1 172.5 l-2.0 4.3" stroke="#c8c8c8" stroke-width="0.7" />
<path d="M502.6 159.4 l-2.1 4.7" stroke="#c8c8c8" stroke-width="0.7" />
<path d="M521.3 130.6 l-1.9 2.9" stroke="#c8c8c8" stroke-width="0.7" />
<path d="M535.2 158.9 l2.3 3.7" stroke="#c8c8c8" stroke-width="0.7" />
<path d="M488.4 167.0 l3.9 2.9" stroke="#c8c8c8" stroke-width="0.7" />
<path d="M538.5 161.0 l0.4 6.7" stroke="#c8c8c8" stroke-width="0.7" />
<path d="M510.0 144.2 l0.3 4.9" stroke="#c8c8c8" stroke-width="0.7" />
<path d="M502.9 160.4 l1.8 7.9" stroke="#c8c8c8" stroke-width="0.7" />
<path d="M498.6 113.7 l-0.8 6.3" stroke="#c8c8c8" stroke-width="0.7" />
<path d="M535.6 147.5 l-3.9 4.3" stroke="#c8c8c8" stroke-width="0.7" />
<path d="M512.4 144.3 l-1.2 2.4" stroke="#c8c8c8" stroke-width="0.7" />
<path d="M503.9 143.3 l-1.9 7.0" stroke="#c8c8c8" stroke-width="0.7" />
<path d="M499.3 142.4 l-2.4 3.3" stroke="#c8c8c8" stroke-width="0.7" />
<path d="M485.5 161.6 l-1.7 5.5" stroke="#c8c8c8" stroke-width="0.7" />
<path d="M501.5 159.9 l2.9 3.5" stroke="#c8c8c8" stroke-width="0.7" />
<path d="M535.4 141.6 l2.9 4.2" stroke="#c8c8c8" stroke-width="0.7" /></g>
<defs><linearGradient id="fadeL" x1="0" x2="1" y1="0" y2="0"><stop offset="0" stop-color="#fff" stop-opacity="1"/><stop offset="0.1" stop-color="#fff" stop-opacity="0.9"/><stop offset="0.16" stop-color="#fff" stop-opacity="0"/><stop offset="0.8" stop-color="#fff" stop-opacity="0"/><stop offset="1" stop-color="#fff" stop-opacity="0.9"/></linearGradient></defs>
<rect x="440" y="0" width="620" height="174" fill="url(#fadeL)" stroke="none"/>
</svg>
  <svg id="emblem" class="abs" style="left:50px;top:26px" width="100" height="104" viewBox="50 26 100 104">
  <defs>
    <radialGradient id="gold" cx="0.5" cy="0.5" r="0.5"><stop offset="0.7" stop-color="#f9d24a"/><stop offset="0.9" stop-color="#f5c530"/><stop offset="1" stop-color="#e5ac20"/></radialGradient>
    <g id="st"><polygon points="0,-1 0.2245,-0.309 0.951,-0.309 0.363,0.118 0.588,0.809 0,0.382 -0.588,0.809 -0.363,0.118 -0.951,-0.309 -0.2245,-0.309"/></g>
  </defs>
  <path d="M63.5,97 L76,100 L90,117 L81,125.5 L67,122 L63,119 Z M133.7,97 L121.2,100 L107.2,117 L116.2,125.5 L130.2,122 L134.2,119 Z" fill="#e01c12"/>
  <path d="M76,108 H121 L117,125.5 H80 Z" fill="#e3241a"/>
  <circle cx="98.5" cy="74.5" r="44.5" fill="url(#gold)"/>
  <circle cx="98.5" cy="73.5" r="34.8" fill="#e8291f"/>
  <g fill="#f0c13a">
    <use href="#st" transform="translate(98,51.5) scale(8.4)"/>
    <use href="#st" transform="translate(81.5,58) scale(4)"/>
    <use href="#st" transform="translate(115,58) scale(4)"/>
    <use href="#st" transform="translate(91.5,67.5) scale(4)"/>
    <use href="#st" transform="translate(105.5,67.5) scale(4)"/>
  </g>
  <g fill="#f7d04a">
    <path d="M88,80.5 H89 V82 H108 V80.5 H109 V82 H111 L113,85.5 H110.5 V89.5 H86.5 V85.5 H84 L86,82 H88 Z"/>
    <rect x="70.7" y="91" width="55.5" height="7.3"/>
  </g>
  <path d="M106.80,106.50 L105.27,107.83 L106.18,109.64 L104.25,110.28 L104.40,112.30 L102.38,112.15 L101.74,114.08 L99.93,113.17 L98.60,114.70 L97.27,113.17 L95.46,114.08 L94.82,112.15 L92.80,112.30 L92.95,110.28 L91.02,109.64 L91.93,107.83 L90.40,106.50 L91.93,105.17 L91.02,103.36 L92.95,102.72 L92.80,100.70 L94.82,100.85 L95.46,98.92 L97.27,99.83 L98.60,98.30 L99.93,99.83 L101.74,98.92 L102.38,100.85 L104.40,100.70 L104.25,102.72 L106.18,103.36 L105.27,105.17 Z" fill="#f6c93c"/>
  <path d="M66,100 C74,108 86,113 98.6,113 C111,113 123,108 131,100 L131,105 C123,113 111,117.5 98.6,117.5 C86,117.5 74,113 66,105 Z" fill="#e3241a"/>
  <path d="M77,115 L89.5,116 L84,124 Z M120.2,115 L107.7,116 L113.2,124 Z" fill="#f6d04c"/>
  <path d="M104.60,118.00 L103.50,118.98 L104.14,120.30 L102.76,120.78 L102.84,122.24 L101.38,122.16 L100.90,123.54 L99.58,122.90 L98.60,124.00 L97.62,122.90 L96.30,123.54 L95.82,122.16 L94.36,122.24 L94.44,120.78 L93.06,120.30 L93.70,118.98 L92.60,118.00 L93.70,117.02 L93.06,115.70 L94.44,115.22 L94.36,113.76 L95.82,113.84 L96.30,112.46 L97.62,113.10 L98.60,112.00 L99.58,113.10 L100.90,112.46 L101.38,113.84 L102.84,113.76 L102.76,115.22 L104.14,115.70 L103.50,117.02 Z" fill="#f6c93c"/>
  <path d="M84,121 C90,123 95,124 98.6,124 C102,124 107,123 113,121 L112,125.5 H85 Z" fill="#e3241a"/>
</svg>
  <div class="sitename">沾化区人民政府</div>
  <div class="siteen">ZHANHUA.GOV.CN</div>
  <div class="btn-portal">门户检索</div>
  <div class="search"></div>
  <svg class="abs" style="left:1050px;top:65px" width="40" height="36" viewBox="1050 65 40 36">
  <circle cx="1069" cy="81.5" r="8.6" fill="none" stroke="#2f5b98" stroke-width="2.6"/>
  <path d="M1063.5,79.5 A5.5,5.5 0 0 1 1067,76" fill="none" stroke="#2f5b98" stroke-width="1.2" opacity="0.6"/>
  <path d="M1075.3,88 L1080.5,93.3" stroke="#2f5b98" stroke-width="4.2" stroke-linecap="round"/>
</svg>
  <div class="search-txt">请输入关键字检索您需要的内容</div>
  <div class="btn-search">搜索</div>
</div>
<div id="nav">
  <svg class="abs" style="left:0;top:0" width="1545" height="60" viewBox="0 174 1545 60" fill="none" stroke="#fff" stroke-width="2.3" stroke-linejoin="round" stroke-linecap="round">
  <path d="M29.4,216 H22.9 V204.6 H18.6 L32.6,191.9 L46.6,204.6 H42.2 V210.3 M42.2,213.3 V216 H35.9 V209.4 H29.4 V216"/>
  <rect x="195.6" y="191.4" width="19.2" height="24.9" rx="2"/>
  <path d="M214.8,198.3 H218.5 Q220.6,198.3 220.6,200.4 V214.2 Q220.6,216.3 218.5,216.3 H214.8" stroke-width="2.1"/>
  <rect x="199.2" y="196" width="6.6" height="4.9" rx="2.45" stroke-width="2"/>
  <path d="M208.3,196.6 H211.3 M208.3,200.3 H211.3 M199.3,204.8 H211.3 M199.3,209.5 H211.3" stroke-width="2"/>
  <path d="M391.6,199.3 L403.9,192 L416.4,199.3 Z" stroke-width="2.2"/>
  <path d="M394.9,200.5 V212 M398.2,200.5 V212 M401.8,200.5 V212 M405.9,200.5 V212 M409.5,200.5 V212 M413.1,200.5 V212" stroke-width="1.6"/>
  <path d="M394,212.6 H413.8 L416.4,216.2 H391.6 Z" stroke-width="2"/>
  <path d="M654.2,215.8 L641.3,203.3 A6.9,6.9 0 0 1 653.3,195.3 A6.9,6.9 0 0 1 666.1,203.3 Z" stroke-width="2.1"/>
  <path d="M653.5,196 L647.5,201.5 M648.5,203 L653.5,198 L662,206.5 M644.5,206.2 L647,203.8 M646.5,208.5 L649.5,205.5 M649,211 L652,208 M651.5,213.5 L654.5,210.5 M656,205 L660.5,209.5" stroke-width="1.9"/>
  <rect x="850.3" y="192" width="12" height="9.2" rx="2.3" stroke-width="2.2"/>
  <rect x="835.9" y="207" width="12" height="9" rx="2.3" stroke-width="2.2"/>
  <path d="M845.8,191.7 C841.5,192.5 838.8,195.8 838.6,200" stroke-width="1.9"/>
  <path d="M852.6,216.2 C857,215.5 859.5,212 859.7,207.8" stroke-width="1.9"/>
  <circle cx="838.5" cy="200.6" r="1.7" fill="#fff" stroke="none"/>
  <circle cx="859.6" cy="207.4" r="1.7" fill="#fff" stroke="none"/>
  <rect x="1031.4" y="192.2" width="23.4" height="23.3" rx="3.6" stroke-width="2.4"/>
  <rect x="1036.2" y="197.6" width="6" height="5.7" rx="1" stroke-width="1.8"/>
  <path d="M1044.6,198.9 H1050.3 M1044.6,202.6 H1050.3 M1035.8,206.5 H1050.3 M1035.8,210.4 H1050.3" stroke-width="1.9"/>
  <rect x="1227.4" y="192.2" width="23.4" height="23.3" rx="2.5" stroke-width="2.4"/>
  <path d="M1237.3,199.6 H1246.8 M1237.3,208.8 H1246.8" stroke-width="2.2"/>
  <path d="M1232.1,197.3 L1232.8,198.8 L1234.3,199 L1233.2,200.1 L1233.5,201.6 L1232.1,200.9 L1230.7,201.6 L1231,200.1 L1229.9,199 L1231.4,198.8 Z M1232.1,206.4 L1232.8,207.9 L1234.3,208.1 L1233.2,209.2 L1233.5,210.7 L1232.1,210 L1230.7,210.7 L1231,209.2 L1229.9,208.1 L1231.4,207.9 Z" fill="#fff" stroke-width="0.8"/>
  <path d="M1421.5,213.9 H1443.5 C1447.5,213.9 1450,210.8 1450,206.9 C1450,203 1447,199.8 1443.3,199.8 C1442,196 1438.8,193.4 1435,193.5 C1432.8,191.7 1430.2,190.9 1427.5,190.9 C1421.5,190.9 1417.8,195.3 1417.5,200.5 C1415.6,202 1414.9,204.3 1414.9,206.8 C1414.9,210.8 1417.6,213.9 1421.5,213.9 Z" stroke-width="2.2"/>
  <path d="M1431.8,197.5 V208.8 M1426.4,203.8 L1431.8,209.2 L1437.2,203.8" stroke-width="2.2"/>
</svg>
  <div class="ni" style="left:60px">首页</div>
  <div class="sep" style="left:153px"></div>
  <div class="ni" style="left:237px">今日沾化</div>
  <div class="sep" style="left:349px"></div>
  <div class="ni" style="left:432px">政府信息公开</div>
  <div class="sep" style="left:597px"></div>
  <div class="ni" style="left:681px">政务服务</div>
  <div class="sep" style="left:793px"></div>
  <div class="ni" style="left:877px">政民互动</div>
  <div class="sep" style="left:988px"></div>
  <div class="ni" style="left:1073px">走进沾化</div>
  <div class="sep" style="left:1184px"></div>
  <div class="ni" style="left:1268px">专题专栏</div>
  <div class="sep" style="left:1380px"></div>
  <div class="ni" style="left:1464px">数据开放</div>
</div>
<div id="crumb">
  <svg class="abs" style="left:74px;top:12px" width="26" height="24" viewBox="74 246 26 24" fill="none" stroke="#2f5b9a" stroke-width="1.6" stroke-linejoin="round" stroke-linecap="round">
  <path d="M78.3,263.3 H95.7" stroke-width="1.8"/>
  <path d="M80.6,258.6 L87,252.4 L93.2,258.6 M82.1,258 V263 M91.8,258 V263" />
  <path d="M85.4,263 V258.5 H88.5 V263" />
  <path d="M90.2,254.2 V256" stroke-width="1.6"/>
</svg>
  <div class="crumb-txt">当前位置：首页<i>&gt;</i> 政府信息公开<i>&gt;</i> 政府信息公开专栏<i>&gt;</i> 法定主动公开内容<i>&gt;</i> 法规文件<i>&gt;</i> 其他文件<i>&gt;</i> 区政府办文件<i>&gt;</i> 沾政办字</div>
</div>
<table class="info">
<tr><td class="l" style="padding:1px 0 1px 0">标题</td><td colspan="3" style="padding:1px 0 1px 0;text-align:left;font-weight:bold;font-size:19px;letter-spacing:0.2px">沾化区人民政府办公室关于印发沾化区地热能供暖改造实施方案的通知</td></tr>
<tr><td class="l">索引号</td><td class="v" style="letter-spacing:0.28px;padding:2px 0 0 0">11371603004387601R/2024-03401</td><td class="l">发文机关</td><td class="v">区政府办公室</td></tr>
<tr><td class="l">发布日期</td><td class="v" style="letter-spacing:0.45px;padding:1px 0 0 0">2024-05-10</td><td class="l">成文日期</td><td class="v" style="letter-spacing:0.45px;padding:1px 0 0 0">2024-05-10</td></tr>
<tr><td class="l">公文种类</td><td class="v">通知</td><td class="l">发文字号</td><td class="v">沾政办字〔2024〕16号</td></tr>
<tr><td class="l">效力状态</td><td class="v">有效</td><td class="l">主题分类</td><td class="v">国土资源、能源</td></tr>
</table>
<div class="abs" style="left:150px;top:588px;width:1248px;height:1px;background:#d8d8d8"></div>
<div class="dt" style="top:646px">沾化区人民政府办公室</div>
<div class="dt" style="top:689px">关于印发沾化区地热能供暖改造</div>
<div class="dt" style="top:729px">实施方案的通知</div>
<div class="side">
  <div style="position:absolute;left:19px;top:24px;font-size:29px;font-weight:bold;color:#2b5597;-webkit-text-stroke:0.5px #2b5597;line-height:44px">解读</div>
  <div style="position:absolute;left:16px;top:96px;width:8px;height:8px;border-radius:50%;background:#333"></div>
  <div style="position:absolute;left:16px;top:84px;width:345px;font-size:19px;letter-spacing:0.2px;color:#444;line-height:33.6px;text-indent:27px;white-space:nowrap">政策简明问答：《关于印发沾化区地<br>热能供暖改造实施方案的通知》解读</div>
</div>
</body></html>
